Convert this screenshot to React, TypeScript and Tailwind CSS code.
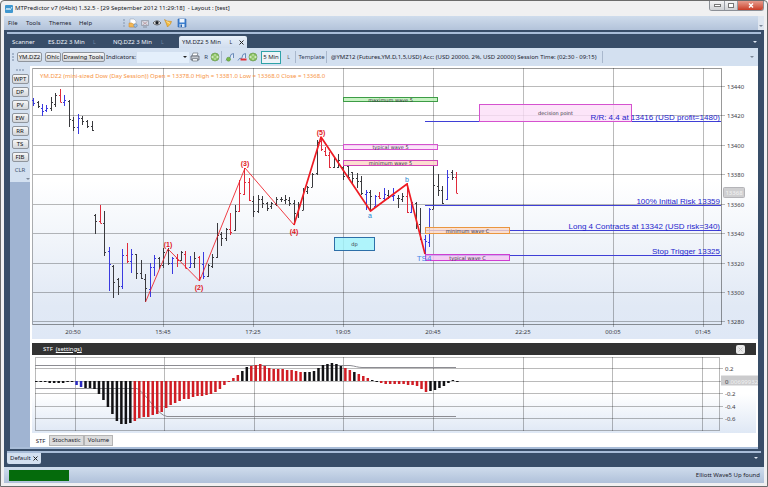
import React from "react";

type Bar = [x: number, high: number, low: number, open: number, close: number, color?: "b" | "r"];

const BAR_COLORS = { b: "#3a3ae0", r: "#e02a3a", k: "#3a3a3e" };

const priceBars: Bar[] = [
  [33, 98, 106, 100, 103, "b"], [38, 101, 108, 102, 106], [42, 104, 116, 108, 111, "b"], [46, 105, 112, 110, 108, "b"],
  [51, 97, 111, 108, 102], [55, 93, 107, 104, 95], [60, 89, 102, 95, 102, "r"], [64, 95, 106, 102, 100, "b"],
  [69, 100, 127, 101, 119], [73, 117, 131, 120, 127], [78, 114, 134, 127, 118, "b"], [82, 116, 125, 118, 121],
  [87, 120, 128, 121, 126], [92, 121, 131, 126, 130],
  [95, 214, 234, 215, 221], [100, 205, 223, 221, 223, "r"], [104, 211, 256, 223, 252], [109, 247, 291, 251, 264, "b"],
  [113, 265, 298, 266, 282], [118, 278, 295, 279, 286], [122, 249, 289, 286, 255, "b"], [127, 243, 263, 255, 261, "r"],
  [131, 249, 273, 261, 254, "b"], [136, 254, 279, 254, 273], [141, 260, 279, 273, 278], [145, 274, 302, 279, 288],
  [150, 263, 297, 289, 267, "b"], [154, 255, 276, 267, 258, "b"], [159, 257, 269, 258, 265], [163, 248, 268, 265, 252],
  [168, 248, 265, 250, 263], [172, 257, 274, 263, 258, "b"], [177, 254, 267, 258, 260, "r"], [181, 251, 261, 260, 252],
  [185, 251, 268, 254, 268, "r"], [190, 256, 268, 267, 263, "b"], [194, 252, 268, 263, 258], [199, 256, 281, 257, 277, "r"],
  [203, 252, 279, 264, 276, "b"], [208, 264, 277, 276, 265], [212, 254, 268, 266, 257], [217, 223, 258, 257, 235],
  [221, 232, 246, 234, 238], [226, 228, 241, 238, 229], [230, 213, 235, 229, 232, "r"], [235, 205, 231, 230, 211],
  [239, 180, 212, 211, 193, "r"], [244, 168, 195, 194, 182, "r"], [249, 178, 201, 182, 200, "r"], [253, 196, 217, 201, 211],
  [258, 195, 213, 211, 199], [262, 196, 208, 199, 203], [267, 202, 211, 203, 208], [271, 202, 209, 206, 203],
  [276, 197, 206, 204, 199], [281, 197, 202, 199, 199], [285, 195, 204, 200, 199], [289, 197, 206, 200, 203],
  [294, 200, 225, 203, 213], [298, 202, 218, 213, 204], [303, 188, 210, 210, 190], [307, 186, 194, 191, 187],
  [312, 173, 187, 187, 174], [317, 140, 175, 173, 142], [321, 138, 151, 141, 149, "r"], [325, 147, 156, 151, 155, "r"],
  [329, 152, 168, 155, 167, "r"], [334, 157, 168, 167, 158], [338, 154, 168, 167, 160], [343, 160, 180, 167, 176],
  [348, 165, 179, 166, 177], [352, 172, 183, 172, 178], [357, 173, 188, 178, 181], [361, 176, 195, 181, 193],
  [366, 190, 210, 194, 192, "b"], [370, 190, 210, 192, 196], [375, 195, 206, 206, 196, "b"], [379, 192, 199, 196, 198, "r"],
  [384, 188, 200, 198, 194, "b"], [388, 190, 199, 195, 197], [393, 188, 201, 196, 195, "b"], [398, 195, 208, 198, 198],
  [402, 193, 202, 199, 196], [407, 183, 213, 196, 212, "r"], [411, 200, 213, 212, 202, "b"], [416, 202, 229, 203, 224],
  [420, 208, 240, 224, 239], [425, 235, 254, 239, 241, "b"], [429, 208, 247, 242, 209, "b"], [433, 165, 209, 209, 185],
  [438, 174, 196, 186, 190], [442, 186, 204, 190, 203], [447, 170, 200, 199, 177, "b"], [452, 170, 180, 172, 177],
  [456, 172, 193, 177, 193, "r"],
];

const priceLabels = [13440, 13420, 13400, 13380, 13360, 13340, 13320, 13300, 13280];
const priceRows = [86, 115, 145, 174, 204, 233, 263, 292, 321];
const timeLabels = ["20:50", "15:45", "17:25", "19:05", "20:45", "22:25", "00:05", "01:45"];
const timeCols = [73, 163, 253, 343, 433, 523, 613, 703];

const waveLabels: [string, number, number][] = [
  ["(1)", 168, 247], ["(2)", 199, 290], ["(3)", 245, 166], ["(4)", 294, 234], ["(5)", 321, 135],
];

const zones: { label: string; x: number; y: number; w: number; h: number; fill: string; stroke: string }[] = [
  { label: "maximum wave 5", x: 343, y: 97, w: 95, h: 5, fill: "#b9efb4", stroke: "#3d9c46" },
  { label: "typical wave 5", x: 343, y: 144, w: 95, h: 6, fill: "#fcdcfa", stroke: "#d552cf" },
  { label: "minimum wave 5", x: 343, y: 160, w: 95, h: 6, fill: "#fbd5c4", stroke: "#d045b8" },
  { label: "minimum wave C", x: 425, y: 227, w: 85, h: 7, fill: "#fbd9c8", stroke: "#ea963f" },
  { label: "typical wave C", x: 425, y: 254, w: 85, h: 7, fill: "#f4c6f2", stroke: "#cf3fd2" },
  { label: "decision point", x: 479, y: 104, w: 153, h: 18, fill: "#fbdff8", stroke: "#d552cf" },
  { label: "dp", x: 334, y: 237, w: 41, h: 14, fill: "#9ff4fb", stroke: "#2d6fa8" },
];

const levels: [string, number][] = [
  ["R/R: 4.4 at 13416 (USD profit=1480)", 121],
  ["100% Initial Risk 13359", 205],
  ["Long 4 Contracts at 13342 (USD risk=340)", 230],
  ["Stop Trigger 13325", 255],
];

const UI = "'Noto Sans','Open Sans',sans-serif";
const ARIAL = "'Liberation Sans',Arial,sans-serif";

function PriceChart() {
  return (
    <svg viewBox="32 66 726 273" className="block w-full" role="img" aria-label="YM.DZ2 5 minute price chart">
      <defs>
        <linearGradient id="sky" x1="0" y1="0" x2="0" y2="1">
          <stop offset="0.42" stopColor="#ffffff" />
          <stop offset="0.88" stopColor="#e1e9f5" />
          <stop offset="1" stopColor="#dfe8f6" />
        </linearGradient>
      </defs>
      <rect x="32" y="66" width="726" height="273" fill="url(#sky)" />
      <g stroke="#000" strokeOpacity="0.27" shapeRendering="crispEdges">
        {priceRows.map((y) => <line key={y} x1="33" x2="725" y1={y + 0.5} y2={y + 0.5} />)}
        {timeCols.map((x) => <line key={x} x1={x + 0.5} x2={x + 0.5} y1="68" y2="327" />)}
        <path d="M33 68.5H721.5V324.5H33" fill="none" strokeOpacity="0.4" />
        <path d="M32.5 68V325" strokeOpacity="0.3" />
      </g>
      <g fontFamily={UI} fontSize="6" fill="#3c3c44">
        {priceRows.map((y, i) => <text key={y} x="727" y={y + 3}>{priceLabels[i]}</text>)}
        {timeCols.map((x, i) => <text key={x} x={x} y="334" textAnchor="middle">{timeLabels[i]}</text>)}
      </g>
      <rect x="723.5" y="187.5" width="21" height="10" rx="1" fill="#cfcfd1" stroke="#b4b4b8" />
      <text x="734" y="195" textAnchor="middle" fontFamily={UI} fontSize="6" fill="#f4f4f4">13368</text>
      <text x="40" y="78" fontFamily={UI} fontSize="6" fill="#f79443">
        YM.DZ2 (mini-sized Dow (Day Session)) Open = 13378.0 High = 13381.0 Low = 13368.0 Close = 13368.0
      </text>
      {priceBars.map(([x, hi, lo, op, cl, c]) => (
        <path
          key={x}
          d={`M${x + 0.5} ${hi}V${lo}M${x - 1} ${op + 0.5}H${x + 0.5}M${x + 0.5} ${cl + 0.5}H${x + 2}`}
          stroke={BAR_COLORS[c ?? "k"]}
          fill="none"
        />
      ))}
      <g stroke="#3f3fd6" shapeRendering="crispEdges">
        {levels.map(([t, y]) => <line key={t} x1="425" x2="721" y1={y + 0.5} y2={y + 0.5} />)}
      </g>
      {zones.map((z) => (
        <g key={z.label}>
          <rect x={z.x + 0.5} y={z.y + 0.5} width={z.w - 1} height={z.h - 1} fill={z.fill} fillOpacity="0.8" stroke={z.stroke} />
          <text x={z.x + z.w / 2} y={z.y + z.h / 2 + 2} textAnchor="middle" fontFamily="'DejaVu Sans',sans-serif" fontSize="5" fill="#33333c">
            {z.label}
          </text>
        </g>
      ))}
      <g fill="none" stroke="#ee1c24" strokeLinejoin="round">
        <path d="M145.500 302L168 249L199.500 281L245 168L294 225" strokeOpacity="0.85" />
        <path d="M294 225L321 137L370.500 211L407 184L425 254" strokeWidth="1.700" />
      </g>
      <g fontFamily={ARIAL} fontSize="7" fontWeight="700" fill="#e01824" textAnchor="middle">
        {waveLabels.map(([t, x, y]) => <text key={t} x={x} y={y}>{t}</text>)}
      </g>
      <g fontFamily={ARIAL} fontSize="7" fill="#1b86cf" textAnchor="middle">
        <text x="370" y="218">a</text>
        <text x="407" y="182">b</text>
        <text x="424" y="261" fontSize="8" fill="#4a86e8">TS4</text>
      </g>
      <g fontFamily={ARIAL} fontSize="8" fill="#2424cc" textAnchor="end">
        {levels.map(([t, y]) => <text key={t} x="720" y={y - 1}>{t}</text>)}
      </g>
    </svg>
  );
}

/* End of each histogram bar; the zero line sits at 381.5. */
const stfEnds = [
  381, 382, 382, 383, 383, 383, 383, 382, 382, 385, 387, 388, 388, 389, 394, 400, 407, 414, 421, 424, 424, 423, 421, 418,
  417, 417, 415, 414, 412, 408, 405, 403, 401, 399, 399, 397, 396, 396, 395, 394, 392, 389, 385, 382, 378, 375, 371, 367,
  366, 365, 364, 366, 368, 369, 369, 369, 370, 370, 371, 372, 372, 372, 371, 368, 365, 364, 363, 364, 366, 368, 370, 372,
  374, 376, 378, 380, 381, 383, 384, 384, 384, 384, 384, 385, 385, 386, 389, 392, 391, 390, 388, 386, 383, 380, 381,
];

function stfColor(i: number) {
  if (i === 9 || i === 10) return "#2a2ac0";
  if (i < 22) return "#111114";
  if (i === 46 || i === 47) return "#111114";
  if (i >= 60 && i <= 68) return "#111114";
  if (i === 71 || i === 75 || i === 76) return "#111114";
  if (i >= 88) return "#111114";
  return "#d01c24";
}

const stfRows = [368, 381, 393, 406, 418];
const stfLabels = ["0.2", "0", "-0.2", "-0.4", "-0.6"];
const stfCols = [75, 164, 254, 343, 433, 523, 612, 702];

function StfChart() {
  return (
    <svg viewBox="32 355 726 78" className="block w-full" role="img" aria-label="STF histogram">
      <defs>
        <linearGradient id="haze" x1="0" y1="0" x2="0" y2="1">
          <stop offset="0.5" stopColor="#ffffff" />
          <stop offset="1" stopColor="#dfe8f5" />
        </linearGradient>
      </defs>
      <rect x="32" y="355" width="724" height="78" fill="url(#haze)" />
      <g stroke="#000" strokeOpacity="0.27" shapeRendering="crispEdges">
        {stfRows.map((y) => <line key={y} x1="35" x2="723" y1={y + 0.5} y2={y + 0.5} />)}
        {stfCols.map((x) => <line key={x} x1={x + 0.5} x2={x + 0.5} y1="357" y2="431" />)}
        <path d="M35.500 357.500H719.500V430.500H35.500Z" fill="none" />
      </g>
      <g fill="none" stroke="#8c8c92">
        <path d="M35 365.500H350C355 366 358 367.500 362 367.500H456" />
        <path d="M35 388.500H137C147 394 157 415 167 416.500H456" />
      </g>
      {stfEnds.map((end, i) => (
        <rect
          key={i}
          x={35 + i * 4.48}
          y={Math.min(end, 381)}
          width="2.500"
          height={Math.max(1, Math.abs(end - 381))}
          fill={stfColor(i)}
        />
      ))}
      <rect x="721" y="375.500" width="37" height="10" fill="#cbcbcd" />
      <g fontFamily={UI} fontSize="6">
        <text x="729" y="384" fill="#f2f2f2">.00699932</text>
        {stfRows.map((y, i) => <text key={y} x="725" y={y + 3} fill="#3c3c44">{stfLabels[i]}</text>)}
      </g>
    </svg>
  );
}

const Sep = () => <span className="h-3 w-px shrink-0 bg-[#a9b8cd]" />;
const Grip = () => <span className="h-2 w-0 shrink-0 border-l-2 border-dotted border-[#a3b3c9]" />;

function Btn({ children, className = "" }: { children: React.ReactNode; className?: string }) {
  return (
    <button className={`flex h-[10px] shrink-0 items-center justify-center rounded-[2px] border border-[#8f959d] bg-linear-to-b from-[#f7f7f7] to-[#d3d6da] text-[#111] ${className}`}>
      {children}
    </button>
  );
}

function PrintIcon() {
  return (
    <svg viewBox="0 0 10 10" className="size-[10px]">
      <path d="M3 1h5l-1 3H2z" fill="#fff" stroke="#6d7580" strokeWidth="0.7" />
      <path d="M1 4h8v4H1z" fill="#c3c8ce" stroke="#4e555e" strokeWidth="0.7" />
      <path d="M2.500 6.500h5V9h-5z" fill="#eef1f4" stroke="#5d646d" strokeWidth="0.6" />
    </svg>
  );
}

function RefreshIcon() {
  return (
    <svg viewBox="0 0 10 10" className="size-[10px]">
      <circle cx="5" cy="5" r="4" fill="#86bf5c" stroke="#6f9c58" strokeWidth="0.7" />
      <path d="M1.800 5h2.500M5.700 5h2.500M5 2v2M5 6v2M3 3.600L1.800 5L3 6.400M7 3.600L8.200 5L7 6.400" fill="none" stroke="#e2f2d2" strokeWidth="0.9" />
    </svg>
  );
}

function ScaleIcon({ minus = false }: { minus?: boolean }) {
  return (
    <svg viewBox="0 0 10 10" className="size-[10px]">
      <path d="M1 8.500L3 6L4.500 7L6 2.500L8.500 1.500V6" fill="#dfeafa" stroke="#5c7fb0" strokeWidth="0.9" />
      {minus
        ? <path d="M3.500 7.500H9.500" stroke="#e0303a" strokeWidth="2" />
        : <circle cx="3.500" cy="7.200" r="2" fill="#78b94a" stroke="#598c3a" strokeWidth="0.5" />}
    </svg>
  );
}

function Toolbar() {
  return (
    <div className="flex h-[18px] items-center bg-[#d3e0f0] pl-[2px] pr-1">
      <Grip />
      <Btn className="ml-[3px] w-[25px]">YM.DZ2</Btn>
      <Btn className="ml-[3px] w-[16px]">Ohlc</Btn>
      <Btn className="ml-px w-[43px]">Drawing Tools</Btn>
      <label htmlFor="indicators" className="ml-px w-[30px]">Indicators:</label>
      <span className="relative ml-px flex">
        <select id="indicators" className="h-[11px] w-[52px] appearance-none bg-[#e4effb]" defaultValue="">
          <option value=""></option>
          <option>STF</option>
        </select>
        <span className="pointer-events-none absolute right-[2px] top-[4px] border-x-[2px] border-t-[2px] border-x-transparent border-t-[#222]" />
      </span>
      <button aria-label="Print" className="ml-px"><PrintIcon /></button>
      <button className="ml-[3px] w-[6px] text-[#33435c]">R</button>
      <button aria-label="Refresh" className="ml-px"><RefreshIcon /></button>
      <span className="ml-px flex"><Sep /></span>
      <button aria-label="Zoom in" className="ml-[3px]"><ScaleIcon /></button>
      <button aria-label="Zoom out" className="ml-[2px]"><ScaleIcon minus /></button>
      <button aria-label="Reset" className="ml-px"><RefreshIcon /></button>
      <button className="ml-[3px] flex h-[13px] w-5 items-center justify-center border border-[#2fa3a8] bg-[#eef4f8]">5 Min</button>
      <button className="ml-[5px] w-[5px] text-[5px] text-[#555]">L</button>
      <span className="ml-[4px] flex"><Sep /></span>
      <button className="ml-[2px] w-[27px] text-[#33435c]">Template</button>
      <span className="ml-px flex"><Sep /></span>
      <span className="ml-[4px] w-[271px]">
        @YMZ12 (Futures,YM.D,1,5,USD) Acc: (USD 20000, 2%, USD 20000) Session Time: (02:30 - 09:15)
      </span>
      <Sep />
      <span className="ml-auto border-x-2 border-t-2 border-x-transparent border-t-[#7c8797]" />
    </div>
  );
}

function TitleBar() {
  return (
    <header className="flex h-[15px] items-center pl-px">
      <svg viewBox="0 0 8 8" className="size-2">
        <rect width="8" height="8" rx="1" fill="#3f97cf" />
        <path d="M1 5l1-2 1 2 1-2 1 2 2-3" fill="none" stroke="#d8effc" strokeWidth="0.9" />
      </svg>
      <h1 className="ml-[2px] text-[#14181f] whitespace-pre">
        MTPredictor v7 (64bit) 1.32.5 - [29 September 2012 11:29:18]  - Layout : [test]
      </h1>
      <div className="mb-auto ml-auto flex h-[10px] overflow-hidden rounded-b-[3px] border border-t-0 border-[#8b8f96]">
        <button aria-label="Minimize" className="flex w-[15px] items-center justify-center border-r border-[#9a9ea5] bg-linear-to-b from-[#f4f4f5] to-[#cfd1d4]">
          <span className="h-[3px] w-[7px] border border-[#777] bg-white" />
        </button>
        <button aria-label="Maximize" className="flex w-[13px] items-center justify-center border-r border-[#9a9ea5] bg-linear-to-b from-[#f4f4f5] to-[#cfd1d4]">
          <span className="h-[5px] w-[6px] border border-[#777] bg-white" />
        </button>
        <button aria-label="Close" className="flex w-[25px] items-center justify-center bg-linear-to-b from-[#e59a8c] to-[#c93a25]">
          <svg viewBox="0 0 6 5" className="h-[5px] w-[6px]"><path d="M1 0.500l4 4M5 0.500l-4 4" stroke="#fff" strokeWidth="1.400" /></svg>
        </button>
      </div>
    </header>
  );
}

function MenuBar() {
  return (
    <nav className="flex h-[14px] items-center bg-linear-to-b from-[#cfdcec] to-[#b3c3da] pl-1 pr-[2px]">
      <button className="w-[18px] text-left">File</button>
      <button className="w-[23px] text-left">Tools</button>
      <button className="w-[30px] text-left">Themes</button>
      <button className="w-[44px] text-left">Help</button>
      <Grip />
      <button aria-label="Open" className="ml-[3px]">
        <svg viewBox="0 0 10 10" className="size-[10px]">
          <path d="M2 1h4l2 2v6H2z" fill="#fff" stroke="#9aa6b6" strokeWidth="0.6" />
          <path d="M1 5h3l1 1h3v3H1z" fill="#f3b755" stroke="#c98a2e" strokeWidth="0.5" />
          <circle cx="7.500" cy="7.500" r="1.700" fill="#9cc1e8" stroke="#5f86b3" strokeWidth="0.6" />
        </svg>
      </button>
      <button aria-label="Layout" className="ml-[2px]">
        <svg viewBox="0 0 10 10" className="size-[10px]">
          <path d="M1.500 2.500h7v5h-7z" fill="#d7dde6" stroke="#8a93a0" strokeWidth="0.7" />
          <path d="M2.500 3.500l5 3.500M7.500 3.500l-5 3.500" stroke="#b9939a" strokeWidth="0.8" />
          <path d="M3 9h4" stroke="#8a93a0" />
        </svg>
      </button>
      <button aria-label="View" className="ml-[2px]">
        <svg viewBox="0 0 10 10" className="size-[10px]">
          <path d="M1 5q4-4.500 8 0q-4 4-8 0z" fill="#fff" stroke="#333" strokeWidth="0.7" />
          <circle cx="5" cy="4.800" r="1.700" fill="#1c1f26" />
        </svg>
      </button>
      <button aria-label="Alerts" className="ml-px">
        <svg viewBox="0 0 10 10" className="size-[10px]">
          <path d="M1.500 1.500L4 3L8.500 3.500L7.500 6L4.500 9L3.500 6z" fill="#f5bb3c" stroke="#c48a26" strokeWidth="0.6" />
          <path d="M3.500 3.500L7 5.500" stroke="#fbe2a0" />
        </svg>
      </button>
      <button aria-label="Save" className="ml-[4px]">
        <svg viewBox="0 0 10 10" className="size-[10px]">
          <path d="M1 1h8v8H1z" fill="#3b7fd0" stroke="#2860a8" strokeWidth="0.6" />
          <path d="M2.500 1h5v3.500h-5z" fill="#eef5fd" />
          <path d="M2.500 6h5V9h-5z" fill="#dbe9f8" />
          <path d="M3.500 6.500h1.500V9H3.500z" fill="#2860a8" />
        </svg>
      </button>
      <span className="-mr-[2px] ml-auto flex h-full w-[6px] items-end justify-center bg-[#dfe6f0] pb-[3px]">
        <span className="border-x-2 border-t-2 border-x-transparent border-t-[#7c8797]" />
      </span>
    </nav>
  );
}

function CloseX() {
  return (
    <svg viewBox="0 0 5 5" className="size-[5px]" aria-hidden="true">
      <path d="M0.500 0.500l4 4M4.500 0.500l-4 4" stroke="#222" />
    </svg>
  );
}

const sideTools = ["WPT", "DP", "PV", "EW", "RR", "TS", "FIB"];

export default function App() {
  return (
    <div className="flex min-h-screen flex-col whitespace-nowrap rounded-t-[4px] border border-[#6b6b6b] bg-[#f0f0f1] px-[3px] pb-[3px] font-['Noto_Sans','Open_Sans',sans-serif] text-[6px] leading-[9px] text-[#1d2430]">
      <TitleBar />
      <MenuBar />
      <div className="flex grow flex-col bg-[#384d68] px-[3px] pt-[2px]">
        <div className="h-[2px] bg-[#a9bdd8]" />
        <div className="mt-[2px] flex h-[12px] items-center pl-[3px] pr-1 text-[#eef3fa]">
          <button className="ml-[2px] w-[36px] text-left">Scanner</button>
          <button className="w-[45px] text-left">ES.DZ2 3 Min</button>
          <span className="w-[20px] text-[5px] text-[#6f86a5]">L</span>
          <button className="w-[48px] text-left">NQ.DZ2 3 Min</button>
          <span className="w-[18px] text-[5px] text-[#6f86a5]">L</span>
          <button className="flex h-full w-[68px] items-center rounded-t-[2px] bg-linear-to-b from-[#e9f1fa] to-[#d0ddee] pl-[3px] text-[#1d2430]">
            YM.DZ2 5 Min
            <span className="ml-auto mr-[7px] text-[5px]">L</span>
            <span className="mr-[3px]"><CloseX /></span>
          </button>
          <span className="ml-auto border-x-2 border-t-2 border-x-transparent border-t-[#dfe7f2]" />
        </div>
        <div className="mx-[3px] flex flex-col">
          <Toolbar />
          <div className="flex bg-white">
            <aside className="w-5 shrink-0 bg-[#a0b4d2]">
              <div className="flex flex-col items-center gap-[3px] bg-[#d3e0f0] pb-[2px] pt-[3px]">
                <span className="h-0 w-2 border-t-2 border-dotted border-[#a3b3c9]" />
                {sideTools.map((t) => <Btn key={t} className="w-[17px]">{t}</Btn>)}
                <button className="h-[10px] text-[#44566f]">CLR</button>
                <span className="self-end border-x-2 border-t-2 border-x-transparent border-t-[#7c8797]" />
              </div>
            </aside>
            <main className="min-w-0 flex-1 pl-[2px]">
              <PriceChart />
              <div className="mr-[2px] mt-1 flex h-[12px] items-center bg-[#323232] pl-[11px] pr-[11px] text-white">
                STF <a href="#settings" className="ml-[3px] underline">(settings)</a>
                <button aria-label="Close panel" className="ml-auto flex size-[9px] items-center justify-center rounded-[2px] bg-[#e9e9e9]">
                  <svg viewBox="0 0 5 5" className="size-[5px]"><path d="M0.500 0.500l4 4M4.500 0.500l-4 4" stroke="#c4c4c4" /></svg>
                </button>
              </div>
              <StfChart />
              <div className="mt-[2px] flex h-3 items-start">
                <button className="h-full w-[17px] bg-white">STF</button>
                <button className="h-[11px] w-[35px] border border-[#b5b5b5] bg-[#dcdcdc]">Stochastic</button>
                <button className="h-[11px] w-[29px] border border-[#b5b5b5] bg-[#dcdcdc]">Volume</button>
              </div>
            </main>
          </div>
          <div className="h-[2px] bg-[#a9bdd8]" />
        </div>
        <div className="mt-[2px] h-[2px] bg-[#a9bdd8]" />
        <div className="flex h-[14px] items-start pr-[3px]">
          <button className="flex h-[11px] w-[34px] items-center rounded-b-[2px] bg-[#d3e0f0] pl-[3px]">
            Default <span className="ml-auto mr-[3px]"><CloseX /></span>
          </button>
          <span className="ml-auto mt-1 border-x-2 border-t-2 border-x-transparent border-t-[#dfe7f2]" />
        </div>
      </div>
      <footer className="flex h-4 items-center bg-linear-to-b from-[#cfdcec] to-[#b0c1da] pl-[5px] pr-1">
        <div className="h-[11px] w-[60px] bg-[#056b0c]" />
        <span className="ml-auto">Elliott Wave5 Up found</span>
      </footer>
    </div>
  );
}
